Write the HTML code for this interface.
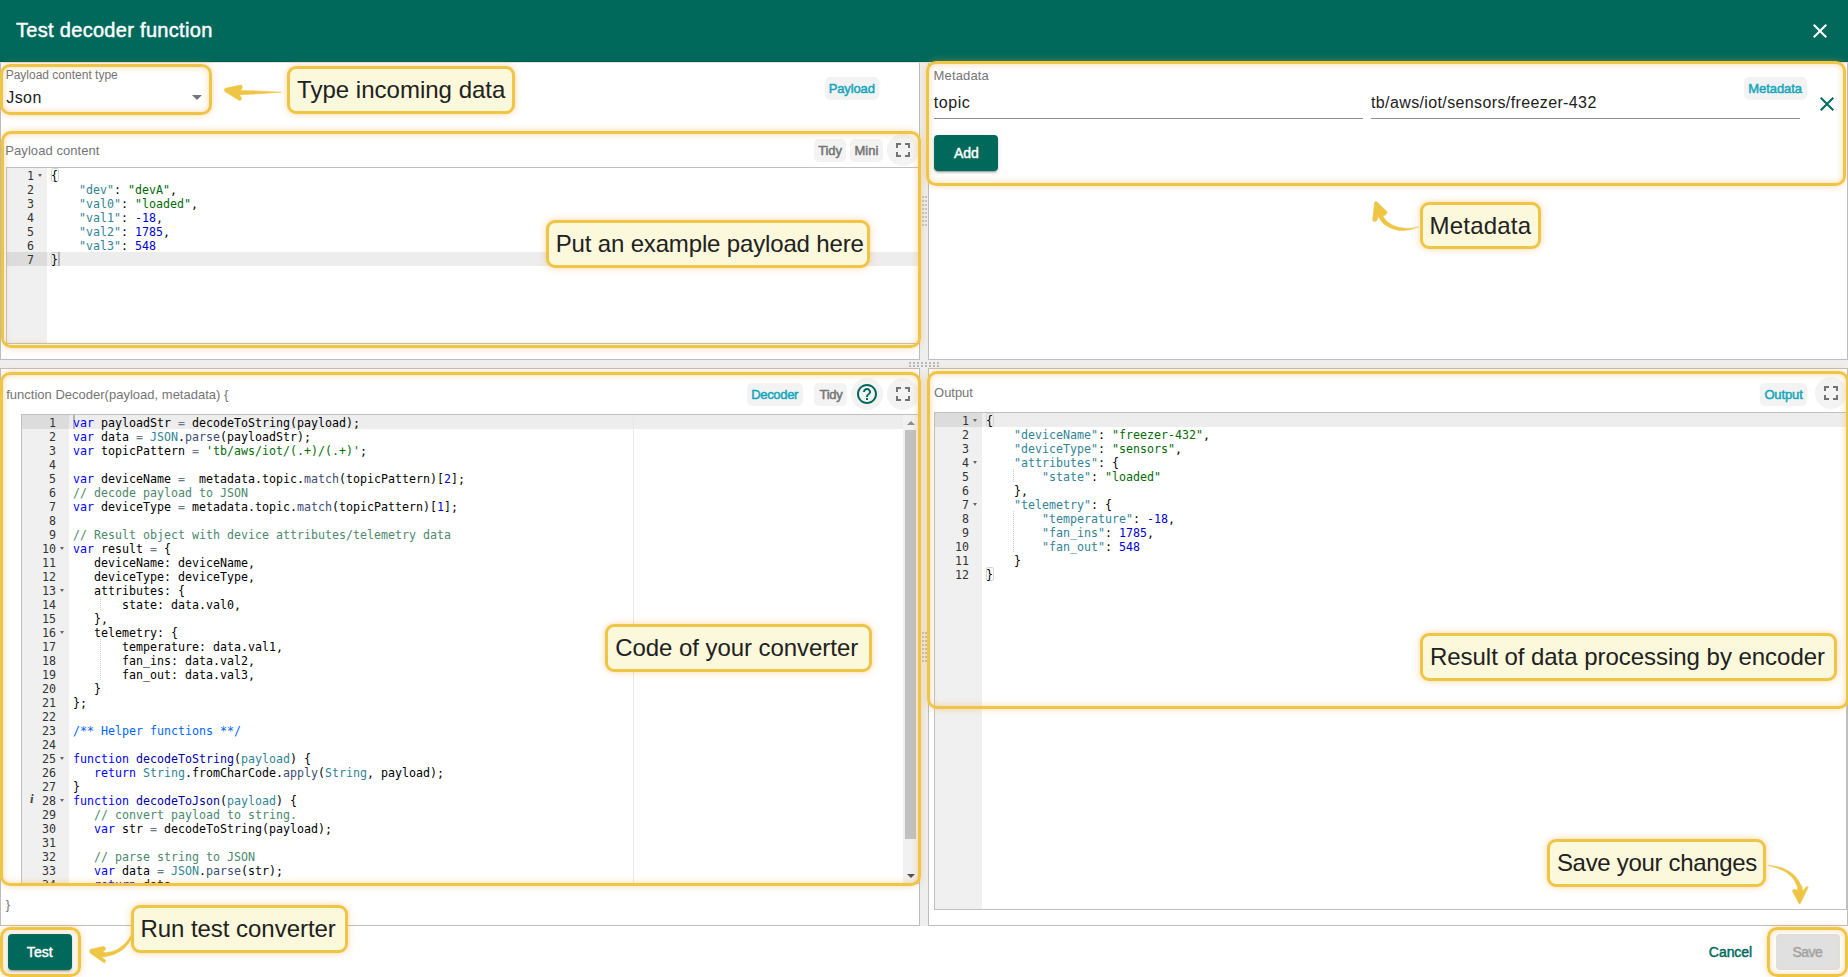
<!DOCTYPE html>
<html lang="en"><head><meta charset="utf-8"><title>Test decoder function</title>
<style>
*{box-sizing:border-box}
html,body{margin:0;padding:0}
body{width:1848px;height:977px;overflow:hidden;position:relative;background:#fff;font-family:"Liberation Sans",sans-serif;color:#212121}
div,span,b,svg{position:absolute}
i{font-style:normal}
/* header */
#hdr{left:0;top:0;width:1848px;height:62px;background:#00695c;z-index:5}
/* panels */
.panel{background:#fff;border:1px solid #bdbdbd}
.gv,.gh{background:#eee}
.ul{height:1px;background:#8c8c8c}
.tbtn{background:#f3f3f3;border-radius:5px;height:23px}
.circ{width:32px;height:32px;border-radius:50%;background:#f3f3f3}
.btn{height:36px;border-radius:4px}
.btn.p{background:#00695c;box-shadow:0 3px 1px -2px rgba(0,0,0,.2),0 2px 2px 0 rgba(0,0,0,.14),0 1px 5px 0 rgba(0,0,0,.12)}
/* editors */
.ed{border:1px solid #c0c0c0;background:#fff;overflow:hidden;box-sizing:content-box}
.ed .gut{left:0;top:0;bottom:0;background:#f0f0f0}
.ed .al{right:0;height:14px;background:#ededed}
.ed .gal{left:0;height:14px;background:#dcdcdc}
.ed .ln{left:0;top:1px;text-align:right;color:#333}
.ed .ln div,.ed .code div{position:static;height:14px;line-height:14px;white-space:pre}
.ed .ln,.ed .code{font-family:"DejaVu Sans Mono","Liberation Mono",monospace;font-size:13px;transform:scaleX(.8945);}
.ed .ln{transform-origin:100% 0}
.ed .code{top:1px;transform-origin:0 0;color:#000}
.fold{width:0;height:0;border-left:2.5px solid transparent;border-right:2.5px solid transparent;border-top:3px solid #666}
.k{color:#00f}.fn{color:#0000a2}.v{color:#318495}.sf{color:#3c4c72}.s{color:#036a07}.n{color:#0000cd}.op{color:#687687}.c{color:#4c886b}.dc{color:#06f}
.bm{width:8px;height:14px;border:1px solid #d4d4d4;border-radius:2px}
.cur{width:2px;height:14px;background:#b4b4b4}
.pm{top:0;bottom:0;width:1px;background:#e8e8e8}
.ig{width:1px;background:repeating-linear-gradient(#ccc 0 1px,transparent 1px 2px)}
.info{font-family:"Liberation Serif",serif;font-style:italic;font-weight:bold;font-size:13px;line-height:14px;color:#444}
.t{white-space:pre;z-index:13;line-height:1}
.tt{font-size:20px;color:#fff;-webkit-text-stroke:.45px #fff;z-index:6}
.l12{font-size:12px;color:#757575}
.lbl{font-size:13px;color:#757575}
.inp{font-size:16px;color:#212121}
.bt{font-size:13px;color:#757575;-webkit-text-stroke:.5px currentColor}
.bt.c{color:#16a6bc}
.bb{font-size:14px;-webkit-text-stroke:.45px currentColor}
.bb.w{color:#fff}.bb.g{color:#00695c}.bb.d{color:#a3a3a3}
.ct{font-size:24px;color:#212121}
.sb{background:#f1f1f1}.th{background:#c1c1c1}
/* highlights */
.hl{border:3px solid #efc545;border-radius:10px;box-shadow:0 0 7px 0 rgba(245,160,50,.4),inset 0 0 7px 0 rgba(245,160,50,.4);z-index:10}
.co{border:3px solid #efc545;border-radius:9px;background:#fbf8db;box-shadow:0 0 7px 0 rgba(245,160,50,.45);z-index:12;height:47.5px}
svg.ar{z-index:11;overflow:visible}
</style></head><body>
<div id="hdr">
<svg style="left:1808px;top:19px" width="24" height="24" viewBox="0 0 24 24"><path fill="#fff" d="M19 6.41 17.59 5 12 10.59 6.410 5 5 6.410 10.59 12 5 17.59 6.410 19 12 13.410 17.59 19 19 17.59 13.410 12z"/></svg>
</div>

<!-- panels -->
<div style="left:0;top:61px;width:1848px;height:1px;background:rgba(0,0,0,.13);z-index:6"></div>
<div style="left:0;top:62px;width:1848px;height:1px;background:#e6e0e0;z-index:1"></div>
<div class="panel" style="left:0;top:61px;width:920px;height:299px"></div>
<div class="panel" style="left:928px;top:61px;width:920px;height:299px"></div>
<div class="panel" style="left:0;top:368px;width:920px;height:558px"></div>
<div class="panel" style="left:928px;top:368px;width:920px;height:558px"></div>
<div class="gv" style="left:920px;top:62px;width:8px;height:298px"></div>
<div class="gv" style="left:920px;top:368px;width:8px;height:558px"></div>
<div class="gh" style="left:0;top:360px;width:1848px;height:8px"></div>
<svg style="left:909px;top:362px" width="30" height="5"><g fill="#b9b9b9"><rect x="0" y="0" width="2" height="2"/><rect x="4" y="0" width="2" height="2"/><rect x="8" y="0" width="2" height="2"/><rect x="12" y="0" width="2" height="2"/><rect x="16" y="0" width="2" height="2"/><rect x="20" y="0" width="2" height="2"/><rect x="24" y="0" width="2" height="2"/><rect x="28" y="0" width="2" height="2"/><rect x="0" y="3" width="2" height="2"/><rect x="4" y="3" width="2" height="2"/><rect x="8" y="3" width="2" height="2"/><rect x="12" y="3" width="2" height="2"/><rect x="16" y="3" width="2" height="2"/><rect x="20" y="3" width="2" height="2"/><rect x="24" y="3" width="2" height="2"/><rect x="28" y="3" width="2" height="2"/></g></svg>

<svg style="left:922px;top:196px" width="5" height="30"><g fill="#c2c2c2"><rect x="0" y="0" width="2" height="2"/><rect x="3" y="0" width="2" height="2"/><rect x="0" y="4" width="2" height="2"/><rect x="3" y="4" width="2" height="2"/><rect x="0" y="8" width="2" height="2"/><rect x="3" y="8" width="2" height="2"/><rect x="0" y="12" width="2" height="2"/><rect x="3" y="12" width="2" height="2"/><rect x="0" y="16" width="2" height="2"/><rect x="3" y="16" width="2" height="2"/><rect x="0" y="20" width="2" height="2"/><rect x="3" y="20" width="2" height="2"/><rect x="0" y="24" width="2" height="2"/><rect x="3" y="24" width="2" height="2"/><rect x="0" y="28" width="2" height="2"/><rect x="3" y="28" width="2" height="2"/></g></svg>
<svg style="left:922px;top:632px" width="5" height="30"><g fill="#c2c2c2"><rect x="0" y="0" width="2" height="2"/><rect x="3" y="0" width="2" height="2"/><rect x="0" y="4" width="2" height="2"/><rect x="3" y="4" width="2" height="2"/><rect x="0" y="8" width="2" height="2"/><rect x="3" y="8" width="2" height="2"/><rect x="0" y="12" width="2" height="2"/><rect x="3" y="12" width="2" height="2"/><rect x="0" y="16" width="2" height="2"/><rect x="3" y="16" width="2" height="2"/><rect x="0" y="20" width="2" height="2"/><rect x="3" y="20" width="2" height="2"/><rect x="0" y="24" width="2" height="2"/><rect x="3" y="24" width="2" height="2"/><rect x="0" y="28" width="2" height="2"/><rect x="3" y="28" width="2" height="2"/></g></svg>
<!-- top-left content -->
<svg style="left:192px;top:95px" width="10" height="5"><path d="M0 0h10L5 5z" fill="#757575"/></svg>
<div class="tbtn c" style="left:825px;top:77px;width:54px"></div>
<div class="tbtn" style="left:814px;top:139px;width:32px"></div>
<div class="tbtn" style="left:850px;top:139px;width:33px"></div>
<div class="circ" style="left:887px;top:134px"></div>
<svg style="left:891px;top:138px" width="24" height="24" viewBox="0 0 24 24"><path fill="#737373" d="M7 14H5v5h5v-2H7v-3zm-2-4h2V7h3V5H5v5zm12 7h-3v2h5v-5h-2v3zM14 5v2h3v3h2V5h-5z"/></svg>
<div class="ed" id="ed1" style="left:6px;top:167px;width:911px;height:175px"><div class="gut" style="width:40px"></div><div class="al" style="top:84px;left:40px"></div><div class="gal" style="top:84px;width:40px"></div><b class="bm" style="left:44px;top:0"></b><b class="bm" style="left:44px;top:84px"></b><b class="cur" style="left:51px;top:84px"></b><div class="ln" style="width:27px"><div>1</div><div>2</div><div>3</div><div>4</div><div>5</div><div>6</div><div>7</div></div><b class="fold" style="left:31px;top:6px"></b><div class="code" style="left:44px"><div>{</div><div>    <i class="v">"dev"</i>: <i class="s">"devA"</i>,</div><div>    <i class="v">"val0"</i>: <i class="s">"loaded"</i>,</div><div>    <i class="v">"val1"</i>: <i class="n">-18</i>,</div><div>    <i class="v">"val2"</i>: <i class="n">1785</i>,</div><div>    <i class="v">"val3"</i>: <i class="n">548</i></div><div>}</div></div></div>

<!-- top-right content -->
<div class="ul" style="left:934px;top:118px;width:429px"></div>
<div class="ul" style="left:1371px;top:118px;width:429px"></div>
<div class="tbtn c" style="left:1744px;top:77px;width:63px"></div>
<svg style="left:1815px;top:92px" width="24" height="24" viewBox="0 0 24 24"><path fill="#00695c" d="M19 6.41 17.59 5 12 10.59 6.410 5 5 6.410 10.59 12 5 17.59 6.410 19 12 13.410 17.59 19 19 17.59 13.410 12z"/></svg>
<div class="btn p" style="left:934px;top:135px;width:64px"></div>

<!-- bottom-left content -->
<div class="tbtn c" style="left:747px;top:383px;width:56px"></div>
<div class="tbtn" style="left:814px;top:383px;width:33px"></div>
<div class="circ" style="left:851px;top:378px"></div>
<svg style="left:855px;top:382px" width="24" height="24" viewBox="0 0 24 24"><path fill="#00695c" d="M11 18h2v-2h-2v2zm1-16C6.480 2 2 6.480 2 12s4.480 10 10 10 10-4.480 10-10S17.520 2 12 2zm0 18c-4.410 0-8-3.590-8-8s3.590-8 8-8 8 3.590 8 8-3.590 8-8 8zm0-14c-2.210 0-4 1.790-4 4h2c0-1.100.9-2 2-2s2 .9 2 2c0 2-3 1.750-3 5h2c0-2.250 3-2.500 3-5 0-2.210-1.790-4-4-4z"/></svg>
<div class="circ" style="left:887px;top:378px"></div>
<svg style="left:891px;top:382px" width="24" height="24" viewBox="0 0 24 24"><path fill="#737373" d="M7 14H5v5h5v-2H7v-3zm-2-4h2V7h3V5H5v5zm12 7h-3v2h5v-5h-2v3zM14 5v2h3v3h2V5h-5z"/></svg>
<div class="ed" id="ed2" style="left:21px;top:414px;width:897px;height:468px"><div class="gut" style="width:47px"></div><div class="al" style="top:0px;left:47px"></div><div class="gal" style="top:0px;width:47px"></div><b class="pm" style="left:611px"></b><b class="cur" style="left:51px;top:0"></b><b class="ig" style="left:78px;top:182px;height:14px"></b><b class="ig" style="left:78px;top:224px;height:42px"></b><span class="info" style="left:8px;top:377px">i</span><div class="sb" style="left:881px;top:0;width:16px;height:468px"></div><div class="th" style="left:883px;top:15px;width:11px;height:409px"></div><svg style="left:884.5px;top:6px" width="8" height="4"><path d="M0 4L4 0L8 4z" fill="#8c8c8c"/></svg><svg style="left:884.5px;top:459px" width="8" height="4"><path d="M0 0L4 4L8 0z" fill="#505050"/></svg><div class="ln" style="width:34px"><div>1</div><div>2</div><div>3</div><div>4</div><div>5</div><div>6</div><div>7</div><div>8</div><div>9</div><div>10</div><div>11</div><div>12</div><div>13</div><div>14</div><div>15</div><div>16</div><div>17</div><div>18</div><div>19</div><div>20</div><div>21</div><div>22</div><div>23</div><div>24</div><div>25</div><div>26</div><div>27</div><div>28</div><div>29</div><div>30</div><div>31</div><div>32</div><div>33</div><div>34</div></div><b class="fold" style="left:38px;top:132px"></b><b class="fold" style="left:38px;top:174px"></b><b class="fold" style="left:38px;top:216px"></b><b class="fold" style="left:38px;top:342px"></b><b class="fold" style="left:38px;top:384px"></b><div class="code" style="left:51px"><div><i class="k">var</i> payloadStr <i class="op">=</i> decodeToString(payload);</div><div><i class="k">var</i> data <i class="op">=</i> <i class="v">JSON</i>.<i class="sf">parse</i>(payloadStr);</div><div><i class="k">var</i> topicPattern <i class="op">=</i> <i class="s">'tb/aws/iot/(.+)/(.+)'</i>;</div><div>&nbsp;</div><div><i class="k">var</i> deviceName <i class="op">=</i>  metadata.topic.<i class="sf">match</i>(topicPattern)[<i class="n">2</i>];</div><div><i class="c">// decode payload to JSON</i></div><div><i class="k">var</i> deviceType <i class="op">=</i> metadata.topic.<i class="sf">match</i>(topicPattern)[<i class="n">1</i>];</div><div>&nbsp;</div><div><i class="c">// Result object with device attributes/telemetry data</i></div><div><i class="k">var</i> result <i class="op">=</i> {</div><div>   deviceName: deviceName,</div><div>   deviceType: deviceType,</div><div>   attributes: {</div><div>       state: data.val0,</div><div>   },</div><div>   telemetry: {</div><div>       temperature: data.val1,</div><div>       fan_ins: data.val2,</div><div>       fan_out: data.val3,</div><div>   }</div><div>};</div><div>&nbsp;</div><div><i class="dc">/** Helper functions **/</i></div><div>&nbsp;</div><div><i class="k">function</i> <i class="fn">decodeToString</i>(<i class="v">payload</i>) {</div><div>   <i class="k">return</i> <i class="v">String</i>.fromCharCode.<i class="sf">apply</i>(<i class="v">String</i>, payload);</div><div>}</div><div><i class="k">function</i> <i class="fn">decodeToJson</i>(<i class="v">payload</i>) {</div><div>   <i class="c">// convert payload to string.</i></div><div>   <i class="k">var</i> str <i class="op">=</i> decodeToString(payload);</div><div>&nbsp;</div><div>   <i class="c">// parse string to JSON</i></div><div>   <i class="k">var</i> data <i class="op">=</i> <i class="v">JSON</i>.<i class="sf">parse</i>(str);</div><div>   <i class="k">return</i> data;</div></div></div>

<!-- bottom-right content -->
<div class="tbtn c" style="left:1760px;top:383px;width:47px"></div>
<div class="circ" style="left:1815px;top:377px"></div>
<svg style="left:1819px;top:381px" width="24" height="24" viewBox="0 0 24 24"><path fill="#737373" d="M7 14H5v5h5v-2H7v-3zm-2-4h2V7h3V5H5v5zm12 7h-3v2h5v-5h-2v3zM14 5v2h3v3h2V5h-5z"/></svg>
<div class="ed" id="ed3" style="left:934px;top:412px;width:911px;height:496px"><div class="gut" style="width:47px"></div><div class="al" style="top:0px;left:47px"></div><div class="gal" style="top:0px;width:47px"></div><b class="bm" style="left:51px;top:0"></b><b class="bm" style="left:51px;top:154px"></b><b class="ig" style="left:78px;top:56px;height:14px"></b><b class="ig" style="left:78px;top:98px;height:42px"></b><div class="ln" style="width:34px"><div>1</div><div>2</div><div>3</div><div>4</div><div>5</div><div>6</div><div>7</div><div>8</div><div>9</div><div>10</div><div>11</div><div>12</div></div><b class="fold" style="left:38px;top:6px"></b><b class="fold" style="left:38px;top:48px"></b><b class="fold" style="left:38px;top:90px"></b><div class="code" style="left:51px"><div>{</div><div>    <i class="v">"deviceName"</i>: <i class="s">"freezer-432"</i>,</div><div>    <i class="v">"deviceType"</i>: <i class="s">"sensors"</i>,</div><div>    <i class="v">"attributes"</i>: {</div><div>        <i class="v">"state"</i>: <i class="s">"loaded"</i></div><div>    },</div><div>    <i class="v">"telemetry"</i>: {</div><div>        <i class="v">"temperature"</i>: <i class="n">-18</i>,</div><div>        <i class="v">"fan_ins"</i>: <i class="n">1785</i>,</div><div>        <i class="v">"fan_out"</i>: <i class="n">548</i></div><div>    }</div><div>}</div></div></div>

<!-- footer -->
<div class="btn p" style="left:8px;top:934px;width:64px"></div>
<div class="btn" style="left:1776px;top:934px;width:64px;background:#e0e0e0;color:#a3a3a3"></div>

<!-- highlights -->
<div class="hl" style="left:0;top:64px;width:212px;height:51px"></div>
<div class="hl" style="left:1.250px;top:130.500px;width:919.750px;height:217.500px"></div>
<div class="hl" style="left:926px;top:61px;width:920px;height:125px"></div>
<div class="hl" style="left:0;top:372px;width:921px;height:514px"></div>
<div class="hl" style="left:927px;top:371px;width:921.500px;height:337.500px"></div>
<div class="hl" style="left:0;top:927.400px;width:81px;height:49.200px"></div>
<div class="hl" style="left:1767.200px;top:927.400px;width:80.800px;height:49.200px"></div>

<!-- callouts -->
<div class="co" style="left:287px;top:66px;width:228px;height:48px"></div>
<div class="co" style="left:546.200px;top:220.100px;width:323.800px;height:47.500px"></div>
<div class="co" style="left:1420px;top:202.200px;width:120.800px;height:47.200px"></div>
<div class="co" style="left:605.100px;top:624.200px;width:266.800px;height:47.600px"></div>
<div class="co" style="left:1420.200px;top:632.900px;width:416.600px;height:47.800px"></div>
<div class="co" style="left:131.400px;top:905.100px;width:216.800px;height:47.700px"></div>
<div class="co" style="left:1547.200px;top:838.900px;width:218.400px;height:47.800px"></div>

<span class="t tt" id="t_title" style="left:16.00px;top:20.00px;letter-spacing:0.307px">Test decoder function</span>
<span class="t l12" id="t_pct" style="left:5.64px;top:69.36px;letter-spacing:0.005px">Payload content type</span>
<span class="t inp" id="t_json" style="left:6.24px;top:89.61px;letter-spacing:0.423px">Json</span>
<span class="t bt c" id="t_bpay" style="left:828.66px;top:81.91px;letter-spacing:-0.121px">Payload</span>
<span class="t lbl" id="t_pc" style="left:5.31px;top:143.61px;letter-spacing:0.068px">Payload content</span>
<span class="t bt" id="t_tidy1" style="left:818.14px;top:143.61px;letter-spacing:-0.077px">Tidy</span>
<span class="t bt" id="t_mini" style="left:854.46px;top:143.61px;letter-spacing:0.030px">Mini</span>
<span class="t lbl" id="t_meta" style="left:933.58px;top:68.81px;letter-spacing:0.151px">Metadata</span>
<span class="t inp" id="t_topic" style="left:933.87px;top:94.50px;letter-spacing:0.553px">topic</span>
<span class="t inp" id="t_tb" style="left:1371.00px;top:94.70px;letter-spacing:0.378px">tb/aws/iot/sensors/freezer-432</span>
<span class="t bt c" id="t_bmeta" style="left:1748.22px;top:82.00px;letter-spacing:-0.060px">Metadata</span>
<span class="t bb w" id="t_add" style="left:954.07px;top:145.61px;letter-spacing:-0.137px">Add</span>
<span class="t lbl" id="t_fd" style="left:6.17px;top:387.81px;letter-spacing:0.010px">function Decoder(payload, metadata) {</span>
<span class="t bt c" id="t_bdec" style="left:751.13px;top:388.00px;letter-spacing:-0.308px">Decoder</span>
<span class="t bt" id="t_tidy2" style="left:819.49px;top:388.00px;letter-spacing:-0.252px">Tidy</span>
<span class="t lbl" id="t_out" style="left:934.05px;top:385.70px;letter-spacing:-0.033px">Output</span>
<span class="t bt c" id="t_bout" style="left:1764.40px;top:387.81px;letter-spacing:-0.133px">Output</span>
<span class="t bb w" id="t_test" style="left:26.84px;top:945.00px;letter-spacing:0.081px">Test</span>
<span class="t bb g" id="t_cancel" style="left:1708.87px;top:944.81px;letter-spacing:-0.061px">Cancel</span>
<span class="t bb d" id="t_save" style="left:1792.49px;top:944.81px;letter-spacing:-0.574px">Save</span>
<span class="t ct" id="t_ca" style="left:297.09px;top:77.61px;letter-spacing:0.011px">Type incoming data</span>
<span class="t ct" id="t_cb" style="left:555.65px;top:231.50px;letter-spacing:-0.152px">Put an example payload here</span>
<span class="t ct" id="t_cc" style="left:1429.61px;top:214.00px;letter-spacing:0.187px">Metadata</span>
<span class="t ct" id="t_cd" style="left:615.13px;top:635.70px;letter-spacing:-0.051px">Code of your converter</span>
<span class="t ct" id="t_ce" style="left:1429.94px;top:644.61px;letter-spacing:-0.033px">Result of data processing by encoder</span>
<span class="t ct" id="t_cf" style="left:140.38px;top:916.81px;letter-spacing:-0.037px">Run test converter</span>
<span class="t ct" id="t_cg" style="left:1556.91px;top:850.61px;letter-spacing:-0.313px">Save your changes</span>
<span class="t lbl" id="t_brace" style="left:5.75px;top:898.00px;letter-spacing:0.000px">}</span>

<!-- arrows -->
<svg class="ar" style="left:0;top:0" width="1848" height="977" viewBox="0 0 1848 977"><g fill="#efc545" stroke="#efc545" stroke-width=".5" stroke-linejoin="round">
<path d="M281.5 92.2C277.6 92.0 264.9 91.3 258.0 91.0C251.2 90.7 243.3 90.7 240.4 90.6L242.3 88.0L242.0 85.6L240.2 85.1L225.2 88.2C225.0 88.5 224.3 89.3 224.3 89.9C224.3 90.5 225.0 91.5 225.2 91.8L239.2 100.5L241.0 100.0L241.7 98.2L239.6 94.8C242.7 94.6 251.0 94.2 258.0 93.8C265.0 93.4 277.6 92.5 281.5 92.2Z"/>
<path d="M1418.6 226.8C1417.0 227.1 1412.6 228.4 1409.0 228.4C1405.4 228.4 1400.4 227.9 1396.8 226.8C1393.2 225.7 1389.9 223.7 1387.6 221.9C1385.2 220.1 1383.5 216.8 1382.7 215.8L1385.5 215.1L1387.4 212.0L1377.0 201.9C1376.8 201.8 1376.1 201.3 1375.7 201.4C1375.3 201.5 1374.8 202.2 1374.6 202.3L1372.6 219.5C1372.7 219.8 1372.8 220.9 1373.2 221.2C1373.6 221.5 1374.7 221.4 1375.0 221.4L1377.1 220.2L1378.0 216.2C1379.1 217.6 1381.5 222.3 1384.6 224.6C1387.7 226.9 1392.7 229.0 1396.8 229.9C1400.9 230.8 1405.4 230.4 1409.0 229.9C1412.6 229.4 1417.0 227.3 1418.6 226.8Z"/>
<path d="M134.3 929.0C133.7 930.8 132.4 936.3 130.8 939.5C129.2 942.7 127.0 945.6 124.5 948.0C122.0 950.4 118.5 952.3 115.5 953.7C112.5 955.1 108.8 955.9 106.5 956.4C104.2 956.9 102.4 956.9 101.6 957.0L105.9 960.6L104.4 963.0L90.6 953.4C90.4 953.0 89.7 952.0 89.7 951.3C89.7 950.6 90.4 949.6 90.6 949.2L104.2 946.3L105.9 948.9L102.9 951.8C103.5 951.9 104.4 952.9 106.5 952.6C108.6 952.4 112.5 951.7 115.5 950.3C118.5 948.9 122.0 946.3 124.5 944.0C127.0 941.7 128.8 938.9 130.4 936.4C132.0 933.9 133.7 930.2 134.3 929.0Z"/>
<path d="M1768.0 865.2C1770.5 865.7 1778.5 866.5 1782.9 868.2C1787.3 869.9 1791.3 872.5 1794.4 875.4C1797.5 878.3 1800.1 883.5 1801.4 885.8C1802.7 888.1 1802.1 888.5 1802.2 889.0L1802.7 891.2L1806.8 886.3L1808.3 887.2L1800.4 903.2C1800.3 903.3 1799.9 904.0 1799.6 904.0C1799.3 904.0 1798.9 903.3 1798.8 903.2L1792.3 890.8L1793.6 889.2L1797.4 890.3C1797.3 889.5 1797.9 888.0 1797.0 885.8C1796.1 883.6 1794.3 879.9 1792.0 877.3C1789.7 874.7 1786.9 872.4 1782.9 870.4C1778.9 868.4 1770.5 866.1 1768.0 865.2Z"/>
</g></svg>
</body></html>
